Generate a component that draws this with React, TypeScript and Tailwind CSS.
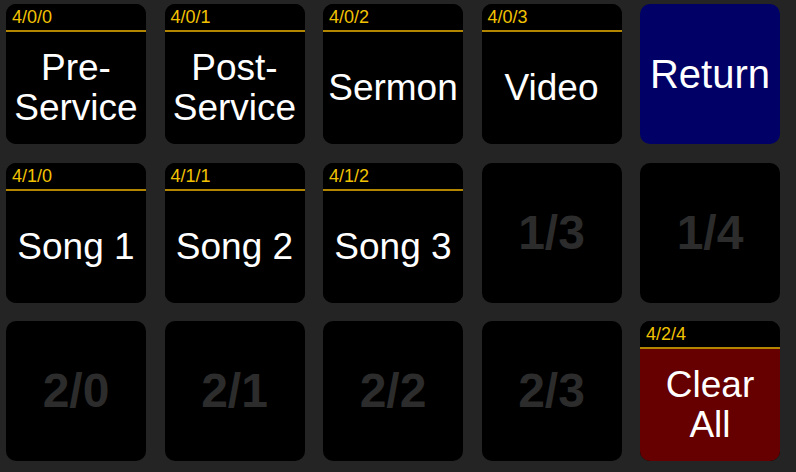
import React from "react";

type Btn = {
  label?: string;
  blank?: string;
  header?: string;
  bg?: string;
};

const rows: Btn[][] = [
  [
    { header: "4/0/0", label: "Pre-\nService" },
    { header: "4/0/1", label: "Post-\nService" },
    { header: "4/0/2", label: "Sermon" },
    { header: "4/0/3", label: "Video" },
    { label: "Return", bg: "blue" },
  ],
  [
    { header: "4/1/0", label: "Song 1" },
    { header: "4/1/1", label: "Song 2" },
    { header: "4/1/2", label: "Song 3" },
    { blank: "1/3" },
    { blank: "1/4" },
  ],
  [
    { blank: "2/0" },
    { blank: "2/1" },
    { blank: "2/2" },
    { blank: "2/3" },
    { header: "4/2/4", label: "Clear\nAll", bg: "red" },
  ],
];

function Button({ b }: { b: Btn }) {
  if (b.blank) {
    return (
      <div className="w-[140px] h-[140px] rounded-[10px] bg-black flex items-center justify-center">
        <span className="text-[48px] font-bold text-[#2c2c2c] leading-none">{b.blank}</span>
      </div>
    );
  }
  const bgClass = b.bg === "blue" ? "bg-[#000066]" : b.bg === "red" ? "bg-[#660000]" : "bg-black";
  const sizeClass = b.label === "Return" ? "text-[40px]" : "text-[37px]";
  return (
    <div className={`w-[140px] h-[140px] rounded-[10px] overflow-hidden flex flex-col ${b.header ? "bg-black" : bgClass}`}>
      {b.header && (
        <div className="h-[28px] shrink-0 bg-black border-b-2 border-[#b38600] pl-[6px] pt-[4px] text-[18px] leading-[19px] text-[#f2c200]">
          {b.header}
        </div>
      )}
      <div className={`flex-1 flex items-center justify-center text-center text-white ${sizeClass} leading-[40px] whitespace-pre-line ${bgClass}`}>
        {b.label}
      </div>
    </div>
  );
}

export default function App() {
  return (
    <div
      className="w-[796px] h-[472px] bg-[#242424] pl-[6px] pt-[4px]"
      style={{ fontFamily: '"Liberation Sans", Arial, sans-serif' }}
    >
      <div className="grid grid-cols-[repeat(5,140px)] gap-x-[18.5px] gap-y-[18.5px]">
        {rows.flat().map((b, i) => (
          <Button key={i} b={b} />
        ))}
      </div>
    </div>
  );
}
